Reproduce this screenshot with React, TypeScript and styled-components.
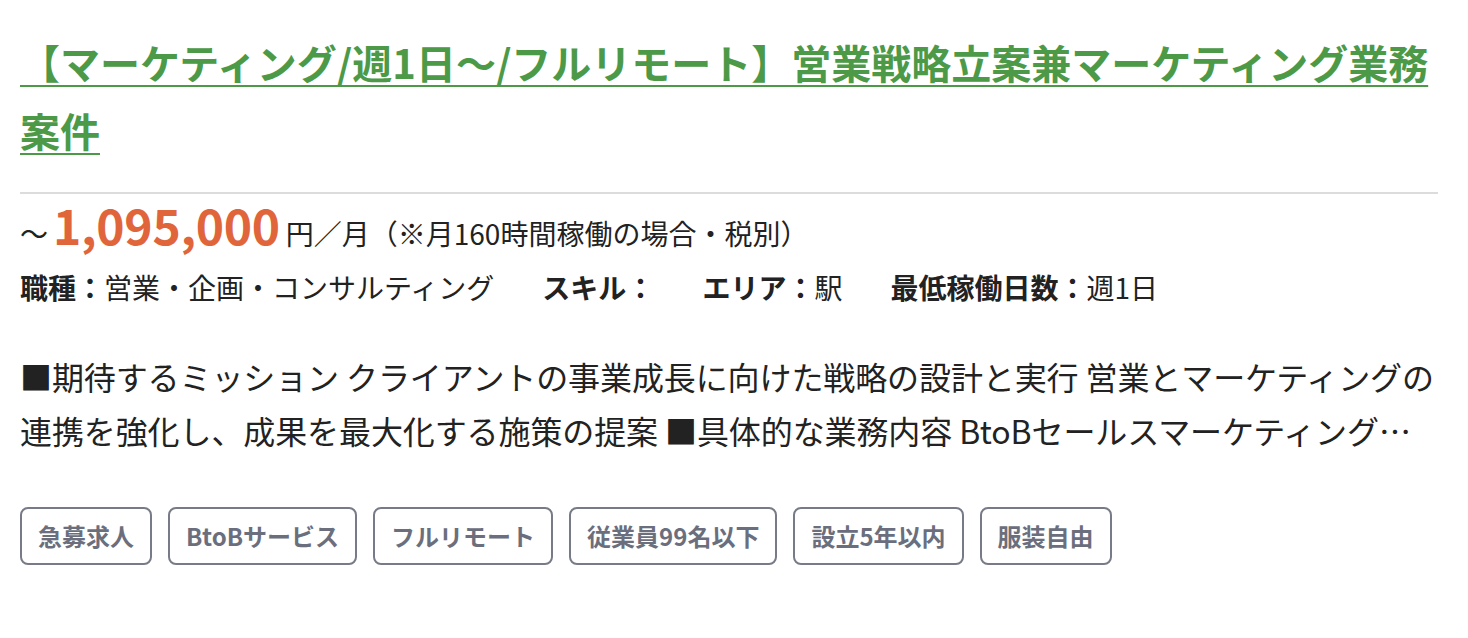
import React from 'react';
import styled, {createGlobalStyle} from 'styled-components';

const GlobalStyle = createGlobalStyle`
  body {
    margin: 0;
    background: #fff;
    font-family: 'Noto Sans CJK JP', 'Noto Sans', sans-serif;
    color: #222;
  }
`;

const tags = ['急募求人', 'BtoBサービス', 'フルリモート', '従業員99名以下', '設立5年以内', '服装自由'];

const details = [
  {label: '職種', value: '営業・企画・コンサルティング'},
  {label: 'スキル', value: ''},
  {label: 'エリア', value: '駅'},
  {label: '最低稼働日数', value: '週1日'},
];

const description =
  '■期待するミッション クライアントの事業成長に向けた戦略の設計と実行 営業とマーケティングの連携を強化し、成果を最大化する施策の提案 ■具体的な業務内容 BtoBセールスマーケティング戦略の立案と実行 リード獲得施策の企画・運用 営業プロセスの改善';

export default function App() {
  return (
    <>
      <GlobalStyle />
      <Card>
        <Title href="#">
          【マーケティング/週1日〜/フルリモート】営業戦略立案兼マーケティング業務案件
        </Title>

        <Divider />

        <PriceRow>
          <Tilde>〜</Tilde>
          <Amount>1,095,000</Amount>
          <Unit>円／月（※月160時間稼働の場合・税別）</Unit>
        </PriceRow>

        <Details>
          {details.map((d) => (
            <Detail key={d.label}>
              <DetailLabel>{d.label}：</DetailLabel>
              {d.value}
            </Detail>
          ))}
        </Details>

        <Description>{description}</Description>

        <Tags>
          {tags.map((t) => (
            <Tag key={t}>{t}</Tag>
          ))}
        </Tags>
      </Card>
    </>
  );
}

const Card = styled.article`
  padding: 28px 30px 40px 20px;
  display: flex;
  flex-direction: column;
`;

const Title = styled.a`
  font-size: 40px;
  line-height: 68px;
  font-weight: 700;
  color: #4c9a48;
  text-decoration: underline;
  text-underline-offset: 6px;
  text-decoration-thickness: 2px;
`;

const Divider = styled.hr`
  margin: 28px 0 0;
  border: 0;
  border-top: 2px solid #dcdcdc;
`;

const PriceRow = styled.div`
  display: flex;
  align-items: baseline;
  height: 60px;
  line-height: 60px;
`;

const Tilde = styled.span`
  font-size: 28px;
  margin-right: 5px;
`;

const Amount = styled.span`
  font-size: 48px;
  font-weight: 700;
  letter-spacing: -0.3px;
  color: #e0653a;
  margin-right: 6px;
`;

const Unit = styled.span`
  font-size: 28px;
`;

const Details = styled.div`
  margin-top: 10px;
  display: flex;
  gap: 48px;
  font-size: 28px;
  line-height: 1.7;
`;

const Detail = styled.span``;

const DetailLabel = styled.b`
  font-weight: 700;
`;

const Description = styled.p`
  margin: 37px 0 0;
  font-size: 32px;
  line-height: 1.7;
  letter-spacing: -0.1px;
  display: -webkit-box;
  -webkit-box-orient: vertical;
  -webkit-line-clamp: 2;
  overflow: hidden;
`;

const Tags = styled.ul`
  list-style: none;
  margin: 50px 0 0;
  padding: 0;
  display: flex;
  gap: 16px;
`;

const Tag = styled.li`
  border: 2px solid #777b88;
  border-radius: 8px;
  padding: 10px 16px;
  font-size: 24px;
  line-height: 34px;
  font-weight: 700;
  color: #6b6f7d;
`;
